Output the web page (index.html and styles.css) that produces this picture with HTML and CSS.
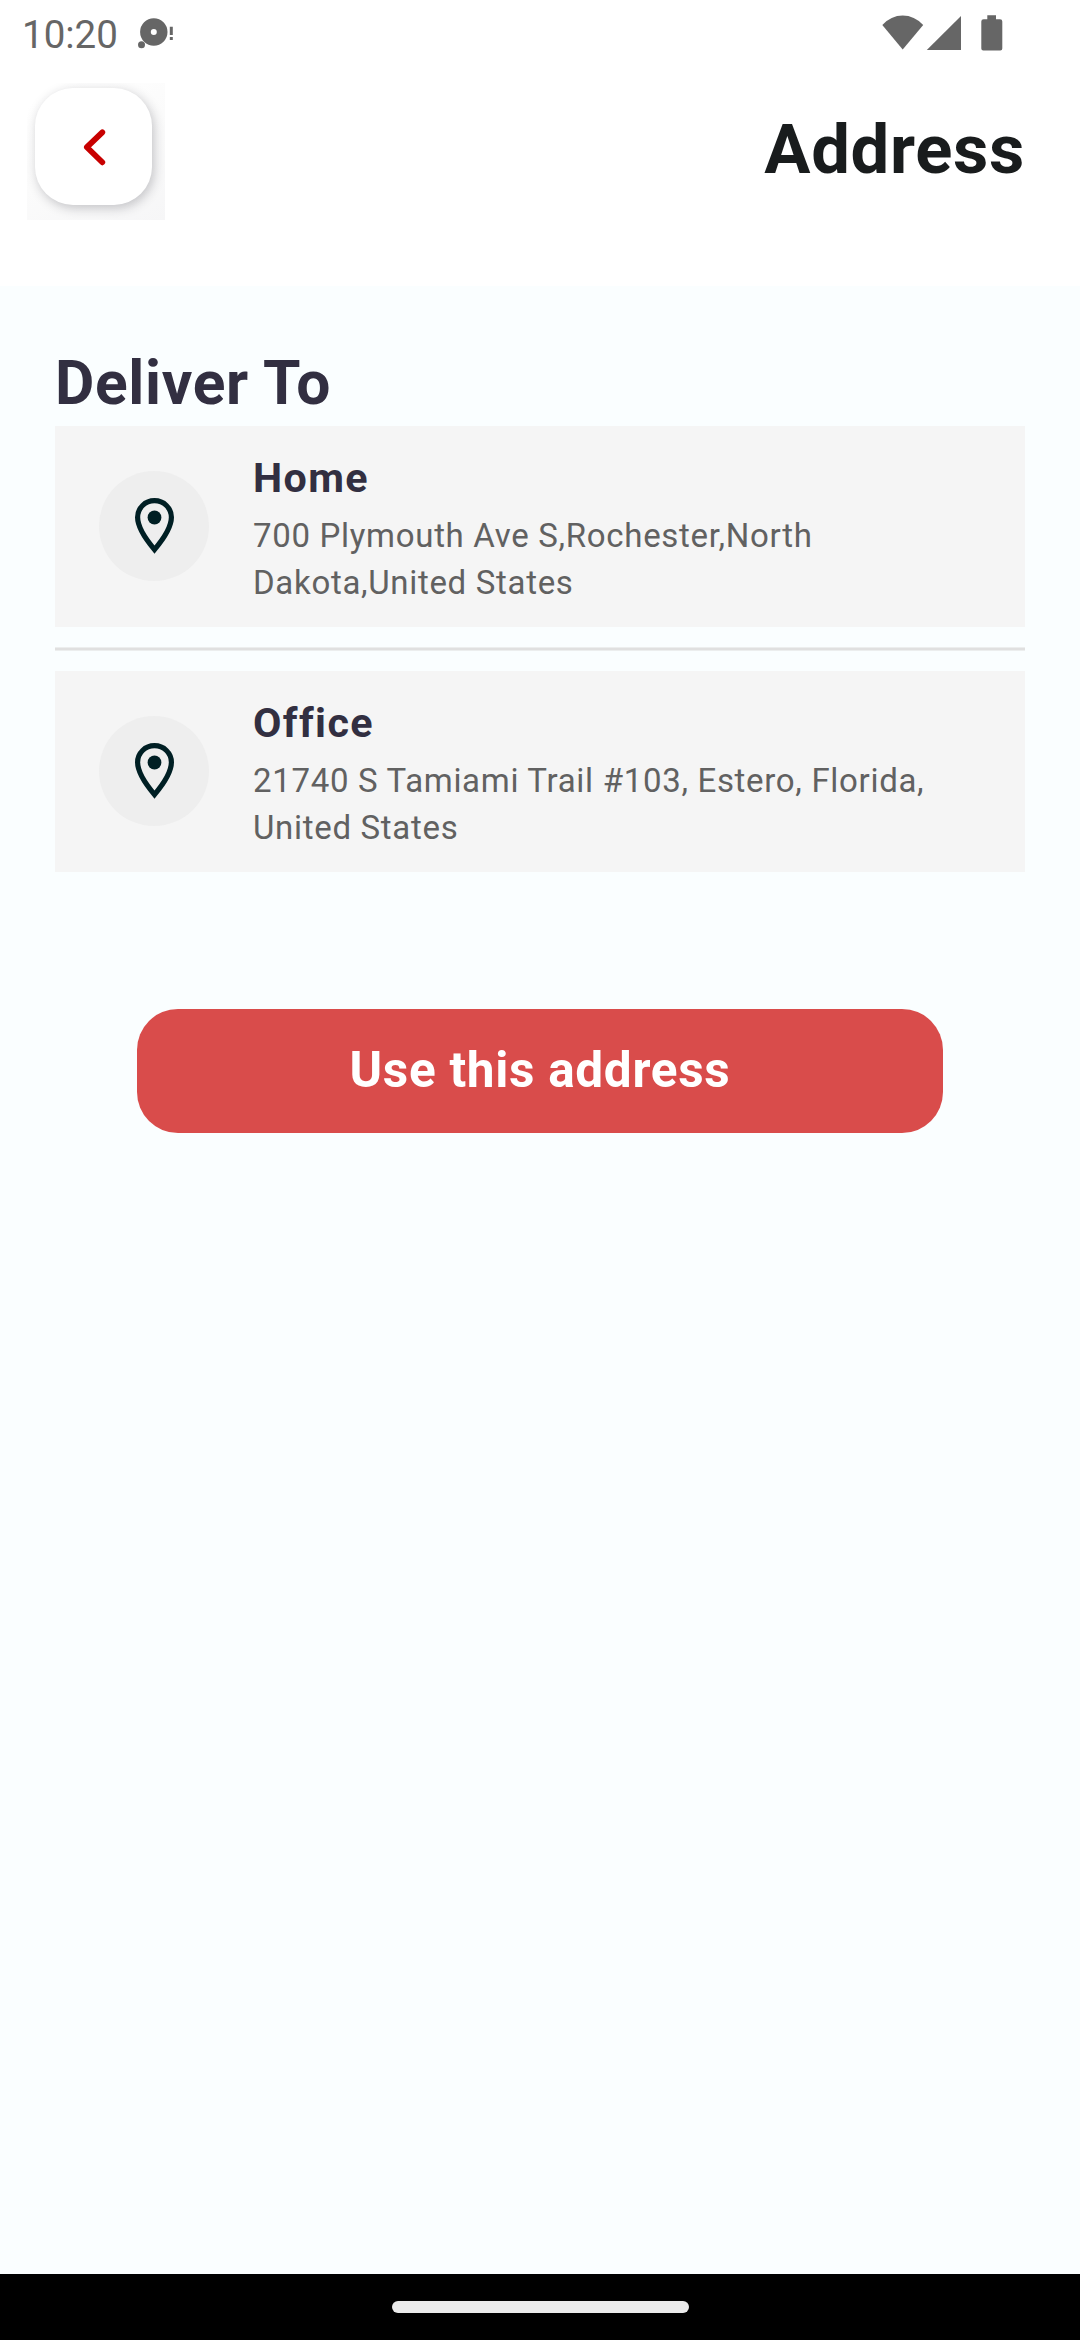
FILE: index.html
```html
<!DOCTYPE html>
<html lang="en">
<head>
<meta charset="utf-8">
<title>Address</title>
<link rel="stylesheet" href="styles.css">
</head>
<body>
<div class="screen">
  <div class="status">
    <span class="clock">10:20</span>
    <svg class="status-app" width="38" height="32" viewBox="0.7 0 38 32" fill="#666">
      <path fill-rule="evenodd" d="M16.500 0.300a13.700 13.700 0 1 1 0 27.400a13.700 13.700 0 1 1 0-27.400zM16.500 11a3 3 0 1 0 0 6a3 3 0 1 0 0-6z"/>
      <circle cx="4.200" cy="26.800" r="3.500"/>
      <path d="M32.500 8.700h3v8.300h-3zM32.500 19h3v3h-3z"/>
    </svg>
    <svg class="status-system" width="122" height="38" viewBox="0 0 122 38" fill="#666">
      <path d="M0.300 10Q9 0.500 20.700 0.500T41.200 10L20.700 34.500z"/>
      <path d="M79 1V35H44.800z"/>
      <path d="M105.300 0.300h8.700v4h4a2.300 2.300 0 0 1 2.300 2.300v27a2 2 0 0 1-2 2h-17a2 2 0 0 1-2-2v-27a2.300 2.300 0 0 1 2.300-2.300h3.700z"/>
    </svg>
  </div>
  <header class="header">
    <div class="back-frame">
      <button class="back" aria-label="Back">
        <svg width="24" height="38" viewBox="0 0 24 38" fill="none" stroke="#c80000" stroke-width="5.800" stroke-linecap="round" stroke-linejoin="round"><path d="M19.300 4.300L3.900 19.200L19.300 34.300"/></svg>
      </button>
    </div>
    <h1 class="title">Address</h1>
  </header>
  <main class="content">
    <h2 class="heading">Deliver To</h2>
    <section class="card">
      <span class="pin">
        <svg width="39" height="56" viewBox="0 0 39 56"><path d="M19.500 2.700C10.200 2.700 2.600 10 2.600 19.300C2.600 30 13.500 44.500 19.500 51.600C25.500 44.500 36.400 30 36.400 19.300C36.400 10 28.800 2.700 19.500 2.700z" fill="none" stroke="#001f24" stroke-width="5.200"/><circle cx="19.500" cy="19.500" r="6.900" fill="#001f24"/></svg>
      </span>
      <div class="info">
        <h3 class="name">Home</h3>
        <p class="address">700 Plymouth Ave S,Rochester,North<br>Dakota,United States</p>
      </div>
    </section>
    <div class="divider"></div>
    <section class="card">
      <span class="pin">
        <svg width="39" height="56" viewBox="0 0 39 56"><path d="M19.500 2.700C10.200 2.700 2.600 10 2.600 19.300C2.600 30 13.500 44.500 19.500 51.600C25.500 44.500 36.400 30 36.400 19.300C36.400 10 28.800 2.700 19.500 2.700z" fill="none" stroke="#001f24" stroke-width="5.200"/><circle cx="19.500" cy="19.500" r="6.900" fill="#001f24"/></svg>
      </span>
      <div class="info">
        <h3 class="name">Office</h3>
        <p class="address">21740 S Tamiami Trail #103, Estero, Florida,<br>United States</p>
      </div>
    </section>
    <button class="submit">Use this address</button>
  </main>
  <footer class="nav"><span class="handle"></span></footer>
</div>
</body>
</html>
```

FILE: styles.css
```css
* { box-sizing: border-box; margin: 0; padding: 0; }
body { font-family: Roboto, "Liberation Sans", sans-serif; background: #fff; }
button { border: 0; font-family: inherit; }
svg { display: block; flex: none; }
.screen { width: 1080px; height: 2340px; display: flex; flex-direction: column; background: #fafeff; overflow: hidden; }

.status { height: 83px; flex: none; display: flex; align-items: flex-start; padding: 0 76px 0 22px; background: #fff; }
.clock { width: 116px; padding-top: 11px; font-size: 38.5px; line-height: 48px; color: #666; }
.status-app { margin-top: 18px; }
.status-system { margin: 15px 0 0 auto; }

.header { height: 203px; flex: none; display: flex; justify-content: space-between; align-items: flex-start; padding: 0 55px 0 27px; background: #fff; }
.back-frame { width: 138px; height: 137px; padding: 5px 0 0 8px; overflow: hidden; background: linear-gradient(150deg, #fff 10%, #fbfbfb 50%, #f6f6f7); }
.back { width: 117px; height: 117px; display: flex; align-items: center; justify-content: center; padding-left: 2px; border-radius: 38px; background: #fff; box-shadow: 2px 3px 11px rgba(30, 30, 45, 0.25); }
.title { padding-top: 26px; font-size: 68.75px; line-height: 82px; font-weight: 700; letter-spacing: 0.69px; color: #191c1d; }

.content { flex: 1; display: flex; flex-direction: column; padding: 56px 55px 0; }
.heading { height: 84px; flex: none; font-size: 60.5px; line-height: 84px; font-weight: 700; letter-spacing: 0.69px; color: #322f41; }
.card { height: 201px; flex: none; display: flex; align-items: flex-start; gap: 44px; padding: 25px 44px 0; background: #f5f5f5; }
.pin { width: 110px; height: 110px; flex: none; display: flex; align-items: center; justify-content: center; margin-top: 20px; padding-bottom: 1px; border-radius: 50%; background: #eee; }
.name { font-size: 41.25px; line-height: 54px; font-weight: 700; letter-spacing: 1.375px; color: #322f41; }
.address { padding-top: 7px; font-size: 33px; line-height: 47px; letter-spacing: 0.69px; color: #616161; white-space: nowrap; }
.divider { height: 4px; flex: none; margin: 20px 0; background: #e0e0e0; border-top: 1px solid #eceeee; border-bottom: 1px solid #eceeee; }
.submit { width: 806px; height: 124px; margin: 137px auto 0; padding-bottom: 2px; border-radius: 41px; background: #d94c4b; color: #fff; font-size: 49.5px; line-height: 122px; font-weight: 700; letter-spacing: 0.69px; }

.nav { height: 66px; flex: none; display: flex; justify-content: center; padding-top: 27px; background: #000; }
.handle { width: 297px; height: 12px; border-radius: 6px; background: #ebebeb; }
```
